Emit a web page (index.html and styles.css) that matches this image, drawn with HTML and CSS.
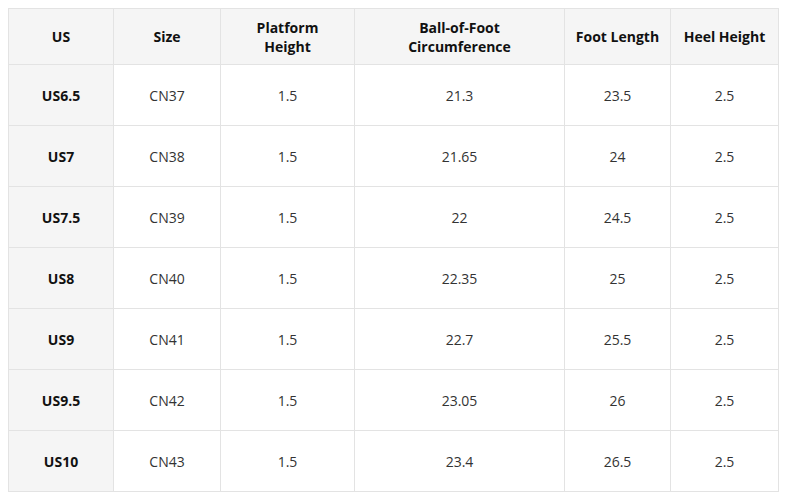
FILE: index.html
```html
<!DOCTYPE html>
<html>
<head>
<meta charset="utf-8">
<link rel="stylesheet" href="styles.css">
</head>
<body>
<table class="size-table">
  <colgroup>
    <col class="c1"><col class="c2"><col class="c3"><col class="c4"><col class="c5"><col class="c6">
  </colgroup>
  <thead>
    <tr>
      <th>US</th>
      <th>Size</th>
      <th>Platform<br>Height</th>
      <th>Ball-of-Foot<br>Circumference</th>
      <th>Foot Length</th>
      <th>Heel Height</th>
    </tr>
  </thead>
  <tbody>
    <tr><th>US6.5</th><td>CN37</td><td>1.5</td><td>21.3</td><td>23.5</td><td>2.5</td></tr>
    <tr><th>US7</th><td>CN38</td><td>1.5</td><td>21.65</td><td>24</td><td>2.5</td></tr>
    <tr><th>US7.5</th><td>CN39</td><td>1.5</td><td>22</td><td>24.5</td><td>2.5</td></tr>
    <tr><th>US8</th><td>CN40</td><td>1.5</td><td>22.35</td><td>25</td><td>2.5</td></tr>
    <tr><th>US9</th><td>CN41</td><td>1.5</td><td>22.7</td><td>25.5</td><td>2.5</td></tr>
    <tr><th>US9.5</th><td>CN42</td><td>1.5</td><td>23.05</td><td>26</td><td>2.5</td></tr>
    <tr><th>US10</th><td>CN43</td><td>1.5</td><td>23.4</td><td>26.5</td><td>2.5</td></tr>
  </tbody>
</table>
</body>
</html>
```
FILE: styles.css
```css
html, body {
  margin: 0;
  padding: 0;
  background: #fff;
}
body {
  padding: 8px;
  font-family: "Open Sans", "Noto Sans", "Liberation Sans", sans-serif;
}
.size-table {
  border-collapse: collapse;
  table-layout: fixed;
  width: 770px;
  font-size: 14px;
  color: #222;
}
.c1 { width: 105px; }
.c2 { width: 107px; }
.c3 { width: 134px; }
.c4 { width: 210px; }
.c5 { width: 106px; }
.c6 { width: 108px; }
.size-table th,
.size-table td {
  border: 1px solid #e3e3e3;
  text-align: center;
  vertical-align: middle;
  padding: 0 4px;
  line-height: 19px;
}
.size-table thead th {
  background: #f5f5f5;
  font-weight: 700;
  height: 55px;
  color: #111;
}
.size-table tbody th {
  background: #f5f5f5;
  font-weight: 700;
  color: #111;
}
.size-table tbody tr {
  height: 61px;
}
.size-table td {
  color: #333;
  font-weight: 400;
}
```
